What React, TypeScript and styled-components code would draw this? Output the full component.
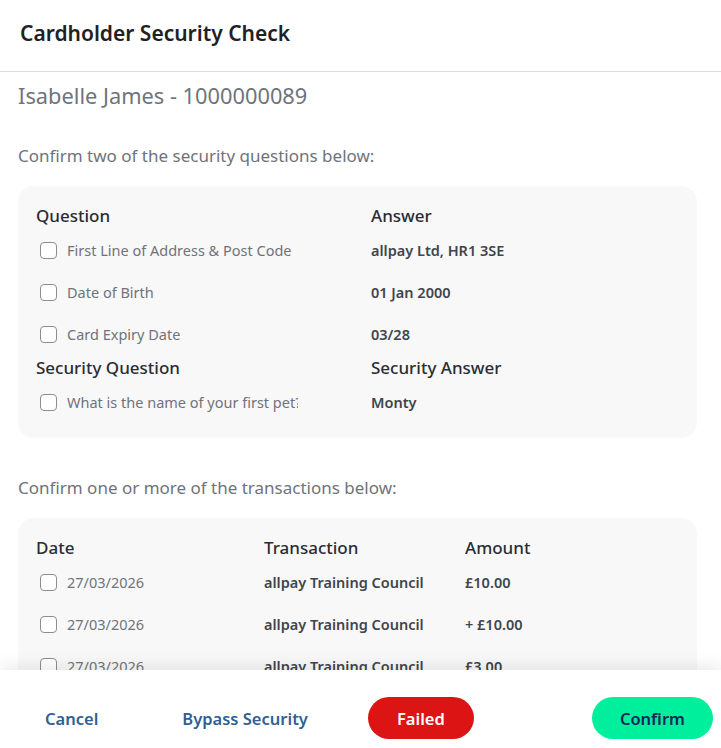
import styled, { createGlobalStyle } from "styled-components"

const Global = createGlobalStyle`
  html, body { margin: 0; padding: 0; background: #fff; }
  body { font-family: "Noto Sans", "Open Sans", sans-serif; }
  * { box-sizing: border-box; }
`

const Modal = styled.div`
  width: 721px;
  height: 748px;
  display: flex;
  flex-direction: column;
  background: #fff;
  overflow: hidden;
`

const Header = styled.div`
  height: 72px;
  flex: 0 0 72px;
  display: flex;
  align-items: center;
  padding: 0 20px;
  border-bottom: 1px solid #dcdcdc;
`

const Title = styled.h2`
  margin: 0 0 6px;
  font-size: 21px;
  font-weight: 600;
  color: #1f2125;
`

const Body = styled.div`
  flex: 1;
  overflow: hidden;
  padding: 8px 24px 0 18px;
`

const Customer = styled.div`
  font-size: 21.8px;
  font-weight: 400;
  color: #6f737a;
  line-height: 32px;
`

const Prompt = styled.p`
  margin: 0;
  font-size: 17px;
  color: #6f737a;
  line-height: 24px;
  margin-top: ${p => p.$top}px;
`

const Card = styled.div`
  margin-top: 18px;
  background: #f8f8f8;
  border-radius: 16px;
  padding: 17px 18px 15px;
`

const Grid = styled.div`
  display: grid;
  grid-template-columns: ${p => p.$cols};
`

const Head = styled.div`
  font-size: 17px;
  font-weight: 500;
  color: #2a2d33;
  line-height: 26px;
`

const Cell = styled.div`
  display: flex;
  align-items: center;
  height: 42px;
  min-width: 0;
`

const Box = styled.span`
  flex: 0 0 17px;
  width: 17px;
  height: 17px;
  border: 1px solid #8a8d92;
  border-radius: 4px;
  background: #fff;
  margin: 0 10px 0 4px;
`

const Label = styled.span`
  font-size: 14.5px;
  color: #6f737a;
  white-space: nowrap;
  overflow: hidden;
  max-width: ${p => p.$max || 400}px;
`

const Value = styled.span`
  font-size: 14.5px;
  font-weight: 600;
  color: #41454c;
  white-space: nowrap;
`

const Footer = styled.div`
  flex: 0 0 78px;
  display: flex;
  align-items: center;
  padding: 18px 8px 0 0;
  background: #fff;
  box-shadow: 0 -6px 14px rgba(0, 0, 0, 0.07);
  position: relative;
`

const LinkButton = styled.button`
  background: none;
  border: 0;
  padding: 0;
  font-family: inherit;
  font-size: 16.5px;
  font-weight: 600;
  color: #2f5f95;
  cursor: pointer;
  margin-left: ${p => p.$ml || 0}px;
`

const Pill = styled.button`
  height: 42px;
  border: 0;
  border-radius: 21px;
  width: ${p => p.$w}px;
  padding: 0;
  font-family: inherit;
  font-size: 16.5px;
  font-weight: 600;
  cursor: pointer;
  background: ${p => p.$bg};
  color: ${p => p.$fg};
  margin-left: ${p => p.$ml || 0}px;
`

const questions = [
  { q: "First Line of Address & Post Code", a: "allpay Ltd, HR1 3SE" },
  { q: "Date of Birth", a: "01 Jan 2000" },
  { q: "Card Expiry Date", a: "03/28" },
]

const transactions = [
  { d: "27/03/2026", t: "allpay Training Council", a: "£10.00" },
  { d: "27/03/2026", t: "allpay Training Council", a: "+ £10.00" },
  { d: "27/03/2026", t: "allpay Training Council", a: "£3.00" },
]

export default function App() {
  return (
    <>
      <Global />
      <Modal>
        <Header>
          <Title>Cardholder Security Check</Title>
        </Header>
        <Body>
          <Customer>Isabelle James - 1000000089</Customer>
          <Prompt $top={32}>Confirm two of the security questions below:</Prompt>
          <Card>
            <Grid $cols="335px 1fr">
              <Head>Question</Head>
              <Head>Answer</Head>
              {questions.map(r => (
                <>
                  <Cell key={r.q}>
                    <Box />
                    <Label>{r.q}</Label>
                  </Cell>
                  <Cell key={r.a}>
                    <Value>{r.a}</Value>
                  </Cell>
                </>
              ))}
              <Head>Security Question</Head>
              <Head>Security Answer</Head>
              <Cell>
                <Box />
                <Label $max={231}>What is the name of your first pet?</Label>
              </Cell>
              <Cell>
                <Value>Monty</Value>
              </Cell>
            </Grid>
          </Card>
          <Prompt $top={38}>Confirm one or more of the transactions below:</Prompt>
          <Card>
            <Grid $cols="228px 201px 1fr">
              <Head>Date</Head>
              <Head>Transaction</Head>
              <Head>Amount</Head>
              {transactions.map((r, i) => (
                <>
                  <Cell key={"d" + i}>
                    <Box />
                    <Label>{r.d}</Label>
                  </Cell>
                  <Cell key={"t" + i}>
                    <Value>{r.t}</Value>
                  </Cell>
                  <Cell key={"a" + i}>
                    <Value>{r.a}</Value>
                  </Cell>
                </>
              ))}
            </Grid>
          </Card>
        </Body>
        <Footer>
          <LinkButton $ml={45}>Cancel</LinkButton>
          <LinkButton $ml={84}>Bypass Security</LinkButton>
          <Pill $bg="#dc1414" $fg="#fff" $w={106} $ml={60}>Failed</Pill>
          <Pill $bg="#00ef9c" $fg="#14285a" $w={121} $ml={118}>Confirm</Pill>
        </Footer>
      </Modal>
    </>
  )
}
